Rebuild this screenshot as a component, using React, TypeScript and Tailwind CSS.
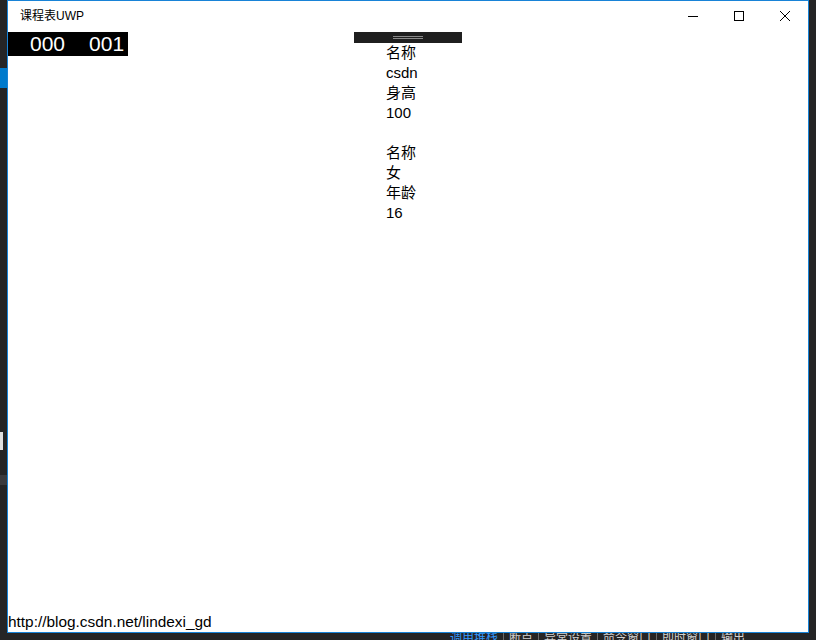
import React from 'react';

const items = ['名称', 'csdn', '身高', '100', '', '名称', '女', '年龄', '16'];

const tabs = [
  { label: '调用堆栈', active: true },
  { label: '断点', active: false },
  { label: '异常设置', active: false },
  { label: '命令窗口', active: false },
  { label: '即时窗口', active: false },
  { label: '输出', active: false },
];

const TitleBar: React.FC = () => (
  <div className="flex h-[31px] items-start">
    <div className="pl-[12px] pt-[7px] text-[12px] leading-[16px] text-black">课程表UWP</div>
    <div className="ml-auto flex">
      <button type="button" className="flex h-[30px] w-[46px] items-center justify-center">
        <svg width="10" height="10" viewBox="0 0 10 10">
          <path d="M0 5.5h10" stroke="#000" strokeWidth="1" />
        </svg>
      </button>
      <button type="button" className="flex h-[30px] w-[46px] items-center justify-center">
        <svg width="10" height="10" viewBox="0 0 10 10">
          <rect x="0.5" y="0.5" width="9" height="9" fill="none" stroke="#000" strokeWidth="1" />
        </svg>
      </button>
      <button type="button" className="flex h-[30px] w-[46px] items-center justify-center">
        <svg width="10" height="10" viewBox="0 0 10 10">
          <path d="M0 0L10 10M10 0L0 10" stroke="#000" strokeWidth="1" />
        </svg>
      </button>
    </div>
  </div>
);

export default function App() {
  return (
    <div
      className="relative h-[640px] w-[816px] overflow-hidden bg-[#252526]"
      style={{ fontFamily: '"Liberation Sans", "Noto Sans CJK SC", sans-serif' }}
    >
      {/* bits of the IDE behind the window */}
      <div className="absolute left-0 top-[68px] h-[20px] w-[7px] bg-[#007acc]" />
      <div className="absolute left-0 top-[432px] h-[18px] w-[3px] bg-[#e0e0e0]" />
      <div className="absolute left-0 top-[475px] h-[10px] w-[7px] bg-[#3a3a3d]" />
      <div className="absolute bottom-0 left-[445px] flex h-[8px] items-start overflow-hidden">
        {tabs.map((t, i) => (
          <div
            key={t.label}
            className={`-mt-[2px] px-[5px] text-[12px] leading-[16px] ${i > 0 ? 'border-l border-[#6a6a6a]' : ''} ${
              t.active ? 'text-[#3399ff]' : 'text-[#d0d0d0]'
            }`}
          >
            {t.label}
          </div>
        ))}
      </div>

      <div className="relative ml-[7px] flex h-[633px] w-[802px] flex-col border border-[#1883d7] bg-white">
        <TitleBar />

        <div className="relative flex flex-1">
          <div className="flex h-[24px] w-[120px] items-center bg-black text-[21px] leading-[24px] text-white">
            <span className="ml-[22px]">000</span>
            <span className="ml-[24px]">001</span>
          </div>

          <div className="ml-[226px] flex flex-col">
            <div className="flex h-[11px] w-[108px] flex-col items-center justify-center gap-[1px] bg-[#1f1f1f]">
              <div className="h-px w-[30px] bg-[#8a8a8a]" />
              <div className="h-px w-[30px] bg-[#8a8a8a]" />
            </div>
            <div className="ml-[32px] flex flex-col">
              {items.map((s, i) => (
                <div key={i} className="h-[20px] text-[15px] leading-[19px] text-black">
                  {s}
                </div>
              ))}
            </div>
          </div>

          <div className="absolute bottom-0 left-0 text-[15.4px] leading-[20px] text-black">
            http://blog.csdn.net/lindexi_gd
          </div>
        </div>
      </div>
    </div>
  );
}
